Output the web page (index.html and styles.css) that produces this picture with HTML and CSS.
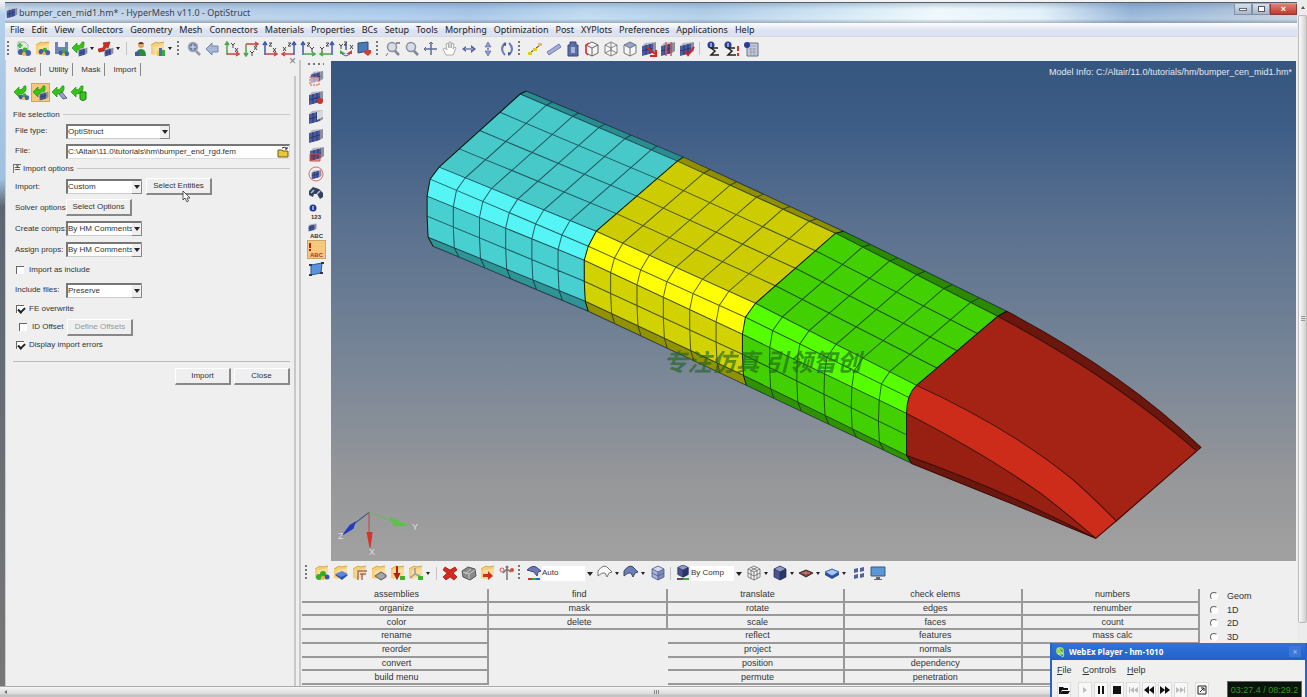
FILE: index.html
```
<!DOCTYPE html>
<html lang="en">
<head>
  <meta charset="UTF-8">
  <title>bumper_cen_mid1.hm* - HyperMesh v11.0 - OptiStruct</title>
  <link rel="stylesheet" href="styles.css">
</head>
<body>

<!-- Icon set -->
<svg class="sprite" width="0" height="0" aria-hidden="true">
  <symbol id="cube" viewBox="0 0 16 16"><path d="M2 4l6-3 6 3v8l-6 3-6-3z" fill="#46558c"/><path d="M2 4l6-3 6 3-6 3z" fill="#8f9cc8"/><path d="M8 7l6-3v8l-6 3z" fill="#2b3768"/><path d="M2 4l6-3 6 3v8l-6 3-6-3zM2 4l6 3 6-3M8 7v8" fill="none" stroke="#222c55" stroke-width=".7"/></symbol>
  <symbol id="cubelight" viewBox="0 0 16 16"><path d="M2 4l6-3 6 3v8l-6 3-6-3z" fill="#aab4d8"/><path d="M2 4l6-3 6 3-6 3z" fill="#d3daee"/><path d="M8 7l6-3v8l-6 3z" fill="#7f8cbd"/><path d="M2 4l6-3 6 3v8l-6 3-6-3zM2 4l6 3 6-3M8 7v8M2 8l6 3 6-3" fill="none" stroke="#4d5887" stroke-width=".8"/></symbol>
  <symbol id="wire" viewBox="0 0 16 16"><path d="M2 4l6-3 6 3v8l-6 3-6-3z" fill="#f6f6f6"/><path d="M2 4l6-3 6 3v8l-6 3-6-3zM2 4l6 3 6-3M8 7v8M2 12l6-3 6 3M8 1v8" fill="none" stroke="#777" stroke-width=".9"/></symbol>
  <symbol id="wiregrid" viewBox="0 0 16 16"><path d="M2 4l6-3 6 3v8l-6 3-6-3zM2 4l6 3 6-3M8 7v8M2 8l6 3 6-3M5 2.500l6 3v8M11 2.500l-6 3v8" fill="#f6f6f6" stroke="#666" stroke-width=".8"/></symbol>
  <symbol id="wirered" viewBox="0 0 16 16"><path d="M2 4l6-3 6 3v8l-6 3-6-3zM2 4l6 3 6-3M8 7v8" fill="#f6f6f6" stroke="#666"/><path d="M4 14l-2-2V4l3-2" fill="none" stroke="#d33" stroke-width="1.500"/></symbol>
  <symbol id="wiretop" viewBox="0 0 16 16"><path d="M2 4l6-3 6 3v8l-6 3-6-3z" fill="#f6f6f6"/><path d="M2 4l6-3 6 3-6 3z" fill="#92a4d6"/><path d="M2 4l6-3 6 3v8l-6 3-6-3zM2 4l6 3 6-3M8 7v8" fill="none" stroke="#777"/></symbol>
  <symbol id="slab" viewBox="0 0 16 16"><path d="M1 5l11-3v10L1 15z" fill="#4a5c9e"/><path d="M1 5l3-3 11-1-3 1z" fill="#b5b8c0"/><path d="M12 2l3-1v9l-3 2z" fill="#8d909c"/><path d="M5 4v10M9 3v10M1 10l11-3" stroke="#243066" stroke-width=".8"/></symbol>
  <symbol id="balls" viewBox="0 0 16 16"><circle cx="5" cy="11" r="3" fill="#4559a8"/><circle cx="9" cy="9" r="2.500" fill="#39b32a"/><circle cx="12" cy="12" r="3" fill="#4a5fae"/><circle cx="8" cy="13" r="2" fill="#e0c43a"/></symbol>
  <symbol id="folder" viewBox="0 0 16 16"><path d="M1 4l5-3 2 1 6-1v9l-9 4-4-1z" fill="#f5cf73"/><path d="M3 6l11-3v7l-9 4z" fill="#f8dda0"/><path d="M1 4l5-3 2 1 6-1" fill="none" stroke="#dda845"/></symbol>
  <symbol id="greenarrow" viewBox="0 0 16 16"><path d="M0 7l5-5v3q4 0 5-4h2q1 8-7 8v3z" fill="#35c516" stroke="#1f8d0c" stroke-width=".7"/></symbol>
  <symbol id="redarrow" viewBox="0 0 16 16"><path d="M0 8l5-1 1-3-1-2 7-1-2 6-2-1-2 4-5 1z" fill="#d52b1e" stroke="#9d1d15" stroke-width=".7"/></symbol>
  <symbol id="i-new" viewBox="0 0 16 16"><path d="M2 1h7l3 3v9H2z" fill="#e4ecdf" stroke="#a7b7a3"/><path d="M4 2v5M1.500 4.500h5" stroke="#49ba45" stroke-width="2"/><use href="#balls"/></symbol>
  <symbol id="i-open" viewBox="0 0 16 16"><use href="#folder"/><use href="#balls" x="2" y="1" width="14" height="14"/></symbol>
  <symbol id="i-save" viewBox="0 0 16 16"><path d="M1 1h13v12H1z" fill="#6c85b5"/><path d="M4 1h7v5H4z" fill="#eef"/><use href="#balls" x="3" y="3" width="13" height="13"/></symbol>
  <symbol id="i-import" viewBox="0 0 16 16"><use href="#greenarrow"/><use href="#slab" x="6" y="6" width="10" height="10"/></symbol>
  <symbol id="i-export" viewBox="0 0 16 16"><use href="#redarrow"/><use href="#slab" x="6" y="6" width="10" height="10"/></symbol>
  <symbol id="i-impballs" viewBox="0 0 16 16"><use href="#greenarrow"/><use href="#balls" x="3" y="3" width="13" height="13"/></symbol>
  <symbol id="i-impwire" viewBox="0 0 16 16"><use href="#greenarrow"/><path d="M7 9l3-2 3 4 2 2-4 1z" fill="#9aa2be" stroke="#5c6690"/></symbol>
  <symbol id="i-impgreen" viewBox="0 0 16 16"><use href="#greenarrow"/><path d="M9 7h6v7l-3 2-3-2z" fill="#39c51d" stroke="#16800a"/></symbol>
  <symbol id="i-user" viewBox="0 0 16 16"><circle cx="9" cy="4" r="3" fill="#e2a36b"/><path d="M6 3q3-4 6 0z" fill="#5b331a"/><path d="M4 15q0-7 5-7t5 7z" fill="#2d8d36"/><path d="M3 11l4-1v5H3z" fill="#415a9d"/></symbol>
  <symbol id="i-folders" viewBox="0 0 16 16"><use href="#folder"/><path d="M9 7h3v8H9z" fill="#3a6fd0"/><path d="M12 9h3v6h-3z" fill="#3caa35"/><path d="M7 10h2v5H7z" fill="#e7d12a"/></symbol>
  <symbol id="i-zoom" viewBox="0 0 16 16"><circle cx="7" cy="6" r="4.500" fill="#d8dce4" stroke="#8a90a0" stroke-width="1.500"/><path d="M10 10l4 4" stroke="#8085a0" stroke-width="2.500"/></symbol>
  <symbol id="i-zoomfit" viewBox="0 0 16 16"><circle cx="7" cy="6" r="4.500" fill="#6a7fae" stroke="#a5a7ae" stroke-width="1.500"/><path d="M7 3v6M4 6h6" stroke="#e2e6ef"/><path d="M10 10l4 4" stroke="#9598a5" stroke-width="2.500"/></symbol>
  <symbol id="i-zoomminus" viewBox="0 0 16 16"><use href="#i-zoom"/><path d="M11 2h4" stroke="#333"/><path d="M3 12l-2 3" stroke="#777"/></symbol>
  <symbol id="i-back" viewBox="0 0 16 16"><path d="M1 8l6-6v3h6v6H7v3z" fill="#a9b8d6" stroke="#7286ae"/></symbol>
  <symbol id="i-ax1" viewBox="0 0 16 16"><path d="M3 14V2M1 4l2-3 2 3" fill="none" stroke="#49a846" stroke-width="1.500"/><path d="M3 13h11M12 11l3 2-3 2" fill="none" stroke="#c44" stroke-width="1.500"/><path d="M7 2l2 2 2-2M9 4v3M11 7l3 4M14 7l-3 4" fill="none" stroke="#444"/></symbol>
  <symbol id="i-ax2" viewBox="0 0 16 16"><path d="M3 3v12M1 12l2 3 2-3" fill="none" stroke="#49a846" stroke-width="1.500"/><path d="M3 3h11M12 1l3 2-3 2" fill="none" stroke="#c44" stroke-width="1.500"/><path d="M7 10l2 2 2-2M9 12v3M11 5l3 4M14 5l-3 4" fill="none" stroke="#444"/></symbol>
  <symbol id="i-ax3" viewBox="0 0 16 16"><path d="M3 14V2M1 4l2-3 2 3" fill="none" stroke="#4057b0" stroke-width="1.500"/><path d="M3 13h11M12 11l3 2-3 2" fill="none" stroke="#c44" stroke-width="1.500"/><path d="M7 2h3L7 5h3M11 7l3 4M14 7l-3 4" fill="none" stroke="#444"/></symbol>
  <symbol id="i-ax4" viewBox="0 0 16 16"><path d="M13 14V2M11 4l2-3 2 3" fill="none" stroke="#4057b0" stroke-width="1.500"/><path d="M13 13H2M4 11l-3 2 3 2" fill="none" stroke="#c44" stroke-width="1.500"/><path d="M7 2h3L7 5h3M2 6l3 4M5 6l-3 4" fill="none" stroke="#444"/></symbol>
  <symbol id="i-ax5" viewBox="0 0 16 16"><path d="M3 14V2M1 4l2-3 2 3" fill="none" stroke="#4057b0" stroke-width="1.500"/><path d="M3 13h11M12 11l3 2-3 2" fill="none" stroke="#49a846" stroke-width="1.500"/><path d="M7 2h3L7 5h3M10 6l2 2 2-2M12 8v3" fill="none" stroke="#444"/></symbol>
  <symbol id="i-ax6" viewBox="0 0 16 16"><path d="M13 14V2M11 4l2-3 2 3" fill="none" stroke="#4057b0" stroke-width="1.500"/><path d="M13 13H2M4 11l-3 2 3 2" fill="none" stroke="#49a846" stroke-width="1.500"/><path d="M7 2h3L7 5h3M1 6l2 2 2-2M3 8v3" fill="none" stroke="#444"/></symbol>
  <symbol id="i-iso" viewBox="0 0 16 16"><path d="M8 9V2" stroke="#4057b0" stroke-width="1.500"/><path d="M8 13l-6-4v4z" fill="#49a846"/><path d="M8 13l6-4v4z" fill="#c44"/><path d="M4 13l4 2 4-2" stroke="#4057b0" fill="none"/><path d="M1 3l2 2 2-2M3 5v3M6 1h3L6 4h3M12 4l3 4M15 4l-3 4" fill="none" stroke="#444"/></symbol>
  <symbol id="i-screen" viewBox="0 0 16 16"><path d="M1 2l10-1v9L1 12z" fill="#4a7ab5" stroke="#2d4e7c"/><path d="M8 9h6v3l-3 3-4-3z" fill="#d33c33"/></symbol>
  <symbol id="i-pan" viewBox="0 0 16 16"><path d="M8 2v12M2 8h12" stroke="#5b6a98" stroke-width="1.500"/><path d="M6 3l2-2 2 2M3 6L1 8l2 2" fill="none" stroke="#5b6a98"/></symbol>
  <symbol id="i-hand" viewBox="0 0 16 16"><path d="M4 14L1 8l2-1 2 2-1-6 2-1 1 5V1h2v6l1-5 2 1-1 5 2-2 1 1-3 7z" fill="#fff" stroke="#999" stroke-width=".8"/></symbol>
  <symbol id="i-horiz" viewBox="0 0 16 16"><path d="M1 8l4-3v6zM15 8l-5-4v8z" fill="#54639d"/><path d="M4 8h8" stroke="#8e97ba" stroke-width="2"/></symbol>
  <symbol id="i-vert" viewBox="0 0 16 16"><path d="M8 1l3 5H5zM8 15l3-5H5z" fill="#8f9ccc" stroke="#5f6fa8" stroke-width=".7"/><circle cx="8" cy="8" r="1" fill="#5f6fa8"/></symbol>
  <symbol id="i-rot" viewBox="0 0 16 16"><path d="M6 2Q0 8 6 14M10 2q6 6 0 12" fill="none" stroke="#6d7dad" stroke-width="2"/><path d="M7 1v4L4 4zM9 15v-4l3 1z" fill="#43528c"/></symbol>
  <symbol id="i-dist" viewBox="0 0 16 16"><path d="M3 12l10-8" stroke="#222"/><path d="M1 11h4v3H1zM11 2h4v3h-4zM6 7h4v3H6z" fill="#e7c62a"/></symbol>
  <symbol id="i-ruler" viewBox="0 0 16 16"><path d="M1 11L13 3l2 3L3 14z" fill="#a2aada" stroke="#7580b5"/></symbol>
  <symbol id="i-weight" viewBox="0 0 16 16"><path d="M5 1h6v3h2v11H3V4h2z" fill="#5b6ea8" stroke="#37477e"/><path d="M6 6h4v6H6z" fill="#a6b4dc"/></symbol>
  <symbol id="i-slabred" viewBox="0 0 16 16"><use href="#slab"/><path d="M7 7l7 6M15 9v6H9" fill="none" stroke="#d22" stroke-width="2"/></symbol>
  <symbol id="i-slabline" viewBox="0 0 16 16"><use href="#slab"/><path d="M6 1v14M11 1v14" stroke="#d55" stroke-width="1.500"/></symbol>
  <symbol id="i-slabcheck" viewBox="0 0 16 16"><use href="#slab"/><path d="M6 10l3 4 6-8" fill="none" stroke="#c22" stroke-width="2"/></symbol>
  <symbol id="i-sum" viewBox="0 0 16 16"><circle cx="6" cy="4" r="3.500" fill="#2a3c98"/><path d="M6 2v4" stroke="#fff"/><path d="M13 7H6l4 3-4 4h8" fill="none" stroke="#222" stroke-width="1.500"/></symbol>
  <symbol id="i-sumred" viewBox="0 0 16 16"><use href="#i-sum" x="-2"/><path d="M14 5v5M14 12v3" stroke="#c33" stroke-width="2"/></symbol>
  <symbol id="i-calc" viewBox="0 0 16 16"><path d="M4 2h11v13H4z" fill="#c4c9d8" stroke="#6a7290"/><path d="M6 5h7M6 8h7M6 11h7M8 7v7M11 7v7" stroke="#9aa2ba"/><circle cx="4" cy="4" r="3" fill="#2a3c98"/></symbol>
  <symbol id="i-mask" viewBox="0 0 16 16"><use href="#slab" x="2" y="-1" width="14" height="14"/><path d="M2 6h9v8H2z" fill="#f4e4e2" fill-opacity=".6" stroke="#d65548" stroke-dasharray="2 1"/></symbol>
  <symbol id="i-maskdot" viewBox="0 0 16 16"><use href="#slab"/><circle cx="12" cy="11" r="3" fill="#c8332b"/></symbol>
  <symbol id="i-unmask" viewBox="0 0 16 16"><use href="#slab"/><path d="M9 3l6-2v7l-6 3z" fill="#d7dae2"/></symbol>
  <symbol id="i-masklow" viewBox="0 0 16 16"><use href="#slab" x="1" y="-1"/><path d="M2 7h10v7H2z" fill="#9a2b33" fill-opacity=".4" stroke="#d65548"/></symbol>
  <symbol id="i-circle" viewBox="0 0 16 16"><use href="#slab" x="3" y="3" width="11" height="11"/><circle cx="8" cy="8" r="7" fill="none" stroke="#dc6a60"/></symbol>
  <symbol id="i-bino" viewBox="0 0 16 16"><path d="M1 6l4-4 6 2 4 4v4l-3 2-3-5-3 0-1 3-4-2z" fill="#32415f"/><path d="M3 8l3-3M9 9l3-3" stroke="#b5c3dd" stroke-width="1.500"/></symbol>
  <symbol id="i-shape" viewBox="0 0 16 16"><path d="M3 4l11-2-1 10-10 2z" fill="#5c94dc" stroke="#2d5796"/><path d="M1 4h3M13 2h3M1 14h3M12 12h3" stroke="#335" stroke-width="2"/></symbol>
  <symbol id="i-fassy" viewBox="0 0 16 16"><use href="#folder"/><circle cx="9" cy="9" r="3" fill="#2fae20"/><circle cx="5" cy="12" r="3" fill="#3baa30"/><circle cx="13" cy="12" r="2.500" fill="#3a52b8"/><circle cx="9" cy="13" r="2" fill="#e6bf2f"/></symbol>
  <symbol id="i-fcomp" viewBox="0 0 16 16"><use href="#folder"/><path d="M2 10l7-3 6 3-6 5z" fill="#2b55b5"/><path d="M2 9l7-3 6 3-7 3z" fill="#5f86d6"/></symbol>
  <symbol id="i-fmat" viewBox="0 0 16 16"><use href="#folder"/><path d="M6 15V6h9M8 9h6M10 9v6" fill="none" stroke="#a0706a" stroke-width="1.500"/></symbol>
  <symbol id="i-fprop" viewBox="0 0 16 16"><use href="#folder"/><path d="M4 11l6-4 5 3v2l-5 3z" fill="#a6a6a6" stroke="#555"/></symbol>
  <symbol id="i-fload" viewBox="0 0 16 16"><use href="#folder"/><path d="M7 1v8M5 9l2 4 2-4z" stroke="#b81e17" fill="#b81e17" stroke-width="2"/><path d="M10 11h5v4h-5z" fill="#3eb52c"/></symbol>
  <symbol id="i-fsys" viewBox="0 0 16 16"><use href="#folder"/><path d="M7 3v6l-5 4M7 9l5 2" fill="none" stroke="#99a" stroke-width="1.500"/><path d="M10 11h5v4h-5z" fill="#3eb52c"/></symbol>
  <symbol id="i-delete" viewBox="0 0 16 16"><path d="M3 2l5 3 5-3 2 3-4 3 4 4-3 3-4-3-4 3-3-3 4-4-4-3z" fill="#d22c22" stroke="#8d1510" stroke-width=".7"/></symbol>
  <symbol id="i-card" viewBox="0 0 16 16"><path d="M1 6l6-4 7 2 1 7-6 4-7-3z" fill="#8a8a8a" stroke="#555"/><path d="M2 7l6 2 6-4M8 9v5M4 9l6-5" fill="none" stroke="#c9c9c9"/></symbol>
  <symbol id="i-org" viewBox="0 0 16 16"><use href="#folder"/><path d="M3 9h5V6l5 5-5 4v-3H3z" fill="#d62c20"/></symbol>
  <symbol id="i-renum" viewBox="0 0 16 16"><path d="M8 15V4M4 8l4-4 4 3" fill="none" stroke="#777" stroke-width="1.500"/><circle cx="3" cy="5" r="2" fill="#eee" stroke="#c55"/><circle cx="13" cy="5" r="2" fill="#d44"/><circle cx="8" cy="2" r="1.500" fill="#777"/></symbol>
  <symbol id="i-auto" viewBox="0 0 16 16"><path d="M1 5q5-5 9-3l5 4-3 1-1 4-3-4z" fill="#6b7bb1" stroke="#39477c"/><path d="M2 13h4v2H2z" fill="#c33"/><path d="M6 13h4v2H6z" fill="#3a3"/><path d="M10 13h4v2h-4z" fill="#36c"/></symbol>
  <symbol id="i-surfw" viewBox="0 0 16 16"><path d="M1 6q5-7 9-4l5 5-3 1-2 4-2-4q-3-1-7 3z" fill="#fafafa" stroke="#777"/></symbol>
  <symbol id="i-surfb" viewBox="0 0 16 16"><path d="M1 6q5-7 9-4l5 5-3 1-2 4-2-4q-3-1-7 3z" fill="#6d7eb6" stroke="#3b4672"/></symbol>
  <symbol id="i-bycomp" viewBox="0 0 16 16"><use href="#cube" x="1" y="-1" width="14" height="14"/><path d="M2 14h6" stroke="#555" stroke-width="2"/><path d="M8 14h6" stroke="#3ba837" stroke-width="2"/></symbol>
  <symbol id="i-shrink" viewBox="0 0 16 16"><path d="M1 8l7-3 7 3-7 4z" fill="#7e3b3b" stroke="#333"/><path d="M4 8h8M8 6v4" stroke="#e5867e"/></symbol>
  <symbol id="i-layer" viewBox="0 0 16 16"><path d="M1 8l7-4 7 4v2l-7 4-7-4z" fill="#2c4ca0"/><path d="M1 7l7-3 7 3-7 4z" fill="#a8c6f4" stroke="#3a5cae"/></symbol>
  <symbol id="i-tiles" viewBox="0 0 16 16"><path d="M3 4l4-1v4l-4 1zM9 3l4-1v4L9 7zM3 10l4-1v4l-4 1zM9 9l4-1v4l-4 1z" fill="#51639d"/></symbol>
  <symbol id="i-monitor" viewBox="0 0 16 16"><path d="M1 2h14v9H1z" fill="#5b97d6" stroke="#3c5878"/><path d="M6 12h4v2H6zM4 14h8v1H4z" fill="#666"/></symbol>
</svg>

<div class="page">
  <div class="window">
    <!-- Title bar -->
    <header class="titlebar">
      <svg class="app-icon"><use href="#slab"/></svg>
      <h1>bumper_cen_mid1.hm* - HyperMesh v11.0 - OptiStruct</h1>
      <div class="window-buttons">
        <button aria-label="Minimize"><i class="min"></i></button>
        <button aria-label="Restore"><i class="max"></i></button>
        <button class="close" aria-label="Close window">×</button>
      </div>
    </header>

    <nav class="menubar">
      <a href="#">File</a>
      <a href="#">Edit</a>
      <a href="#">View</a>
      <a href="#">Collectors</a>
      <a href="#">Geometry</a>
      <a href="#">Mesh</a>
      <a href="#">Connectors</a>
      <a href="#">Materials</a>
      <a href="#">Properties</a>
      <a href="#">BCs</a>
      <a href="#">Setup</a>
      <a href="#">Tools</a>
      <a href="#">Morphing</a>
      <a href="#">Optimization</a>
      <a href="#">Post</a>
      <a href="#">XYPlots</a>
      <a href="#">Preferences</a>
      <a href="#">Applications</a>
      <a href="#">Help</a>
    </nav>

    <!-- Main toolbar -->
    <div class="toolbar">
      <span class="grip"></span>
      <button class="tool"><svg><use href="#i-new"/></svg></button>
      <button class="tool"><svg><use href="#i-open"/></svg></button>
      <button class="tool"><svg><use href="#i-save"/></svg></button>
      <button class="tool drop"><svg><use href="#i-import"/></svg></button>
      <button class="tool drop"><svg><use href="#i-export"/></svg></button>
      <span class="sep"></span>
      <button class="tool"><svg><use href="#i-user"/></svg></button>
      <button class="tool drop"><svg><use href="#i-folders"/></svg></button>
      <span class="grip"></span>
      <button class="tool"><svg><use href="#i-zoomfit"/></svg></button>
      <button class="tool"><svg><use href="#i-back"/></svg></button>
      <button class="tool"><svg><use href="#i-ax1"/></svg></button>
      <button class="tool"><svg><use href="#i-ax2"/></svg></button>
      <button class="tool"><svg><use href="#i-ax3"/></svg></button>
      <button class="tool"><svg><use href="#i-ax4"/></svg></button>
      <button class="tool"><svg><use href="#i-ax5"/></svg></button>
      <button class="tool"><svg><use href="#i-ax6"/></svg></button>
      <button class="tool"><svg><use href="#i-iso"/></svg></button>
      <button class="tool"><svg><use href="#i-screen"/></svg></button>
      <span class="grip"></span>
      <button class="tool"><svg><use href="#i-zoomminus"/></svg></button>
      <button class="tool"><svg><use href="#i-zoom"/></svg></button>
      <button class="tool"><svg><use href="#i-pan"/></svg></button>
      <button class="tool"><svg><use href="#i-hand"/></svg></button>
      <button class="tool"><svg><use href="#i-horiz"/></svg></button>
      <button class="tool"><svg><use href="#i-vert"/></svg></button>
      <button class="tool"><svg><use href="#i-rot"/></svg></button>
      <span class="grip"></span>
      <button class="tool"><svg><use href="#i-dist"/></svg></button>
      <button class="tool"><svg><use href="#i-ruler"/></svg></button>
      <button class="tool"><svg><use href="#i-weight"/></svg></button>
      <button class="tool"><svg><use href="#wirered"/></svg></button>
      <button class="tool"><svg><use href="#wire"/></svg></button>
      <button class="tool"><svg><use href="#wiretop"/></svg></button>
      <button class="tool"><svg><use href="#i-slabred"/></svg></button>
      <button class="tool"><svg><use href="#i-slabline"/></svg></button>
      <button class="tool"><svg><use href="#i-slabcheck"/></svg></button>
      <span class="sep"></span>
      <button class="tool"><svg><use href="#i-sum"/></svg></button>
      <button class="tool"><svg><use href="#i-sumred"/></svg></button>
      <button class="tool"><svg><use href="#i-calc"/></svg></button>
    </div>

    <div class="main">
      <!-- Import browser -->
      <aside class="browser">
        <button class="browser-close" aria-label="Close browser">×</button>
        <div class="tabs">
          <button>Model</button>
          <button>Utility</button>
          <button>Mask</button>
          <button>Import</button>
        </div>
        <div class="browser-body">
          <div class="import-types">
            <button class="tool"><svg><use href="#i-impballs"/></svg></button>
            <button class="tool active"><svg><use href="#i-import"/></svg></button>
            <button class="tool"><svg><use href="#i-impwire"/></svg></button>
            <button class="tool"><svg><use href="#i-impgreen"/></svg></button>
          </div>
          <form class="import-form">
            <div class="legend">File selection</div>
            <div class="row">
              <label for="file-type">File type:</label>
              <span class="combo wide"><select id="file-type"><option>OptiStruct</option></select></span>
            </div>
            <div class="row">
              <label for="file">File:</label>
              <span class="file-box">
                <input type="text" id="file" value="C:\Altair\11.0\tutorials\hm\bumper_end_rgd.fem">
                <button type="button" aria-label="Browse"><svg viewBox="0 0 12 12"><path d="M1 4h4l1 1h5v6H1z" fill="#e8c83a" stroke="#6d5c14"/><path d="M5 2q3-2 5 1M10 1v2H8" fill="none" stroke="#222"/></svg></button>
              </span>
            </div>
            <div class="legend options"><span class="toggle">≚</span>Import options</div>
            <div class="row tall">
              <label for="import-mode">Import:</label>
              <span class="combo"><select id="import-mode"><option>Custom</option></select></span>
              <span class="entities">
                <button type="button" class="btn">Select Entities</button>
                <svg class="cursor" viewBox="0 0 9 13"><path d="M1 1v9l2-2 2 4 1.500-1-1.500-3h3z" fill="#fff" stroke="#333" stroke-width=".8"/></svg>
              </span>
            </div>
            <div class="row tall">
              <span class="name">Solver options:</span>
              <button type="button" class="btn">Select Options</button>
            </div>
            <div class="row tall">
              <label for="comps">Create comps:</label>
              <span class="combo"><select id="comps"><option>By HM Comments</option></select></span>
            </div>
            <div class="row tall">
              <label for="props">Assign props:</label>
              <span class="combo"><select id="props"><option>By HM Comments</option></select></span>
            </div>
            <div class="row check">
              <input type="checkbox" id="as-include"><label for="as-include">Import as include</label>
            </div>
            <div class="row">
              <label for="include-files">Include files:</label>
              <span class="combo"><select id="include-files"><option>Preserve</option></select></span>
            </div>
            <div class="row check short">
              <input type="checkbox" id="overwrite" checked><label for="overwrite">FE overwrite</label>
            </div>
            <div class="row check short indent">
              <input type="checkbox" id="offset"><label for="offset">ID Offset</label>
              <button type="button" class="btn" disabled>Define Offsets</button>
            </div>
            <div class="row check short">
              <input type="checkbox" id="errors" checked><label for="errors">Display import errors</label>
            </div>
            <div class="actions">
              <button type="submit" class="btn">Import</button>
              <button type="button" class="btn">Close</button>
            </div>
          </form>
        </div>
      </aside>

      <section class="workspace">
        <div class="view">
          <div class="side-tools">
            <span class="grip flat"></span>
            <button class="tool"><svg><use href="#i-mask"/></svg></button>
            <button class="tool"><svg><use href="#i-maskdot"/></svg></button>
            <button class="tool"><svg><use href="#i-unmask"/></svg></button>
            <button class="tool"><svg><use href="#slab"/></svg></button>
            <button class="tool"><svg><use href="#i-masklow"/></svg></button>
            <button class="tool"><svg><use href="#i-circle"/></svg></button>
            <button class="tool"><svg><use href="#i-bino"/></svg></button>
            <button class="tool"><svg viewBox="0 0 16 16"><circle cx="5" cy="4" r="3.500" fill="#24399d"/><path d="M5 2v4" stroke="#fff"/><text x="3" y="15" class="glyph">123</text></svg></button>
            <button class="tool"><svg viewBox="0 0 16 16"><use href="#slab" width="9" height="9"/><text x="2" y="15" class="glyph">ABC</text></svg></button>
            <button class="tool active"><svg viewBox="0 0 16 16"><path d="M2 1v5M2 7v2" stroke="#b32218" stroke-width="2"/><text x="2" y="15" class="glyph glyph-red">ABC</text></svg></button>
            <button class="tool"><svg><use href="#i-shape"/></svg></button>
          </div>
          <div class="canvas">
            <svg class="scene" viewBox="331 61 964 499" preserveAspectRatio="xMinYMin meet">
              <g id="model"></g>
              <!-- end cap surface -->
              <path d="M997 316L1006 311Q1122 372 1200 447L1195 450Q1110 376 997 316z" fill="#6b170d"/>
              <path d="M906 413L906 455L911 463Q980 491 1040 515L1095 538Q1065 512 1040 493Q985 454 906 413z" fill="#982012"/>
              <path d="M906 455L911 463Q980 491 1040 515L1095 538Q1000 488 906 455z" fill="#6b170d"/>
              <path d="M916 385L997 316Q1110 376 1195 450L1200 447L1116 521Q1090 495 1073 480Q1010 428 916 385z" fill="#a42315"/>
              <path d="M916 385Q1010 428 1073 480Q1090 495 1116 521L1095 538Q1065 512 1040 493Q985 454 906 413Q906 394 916 385z" fill="#cd2c1a"/>
              <path class="edge" d="M997 316L1006 311Q1122 372 1200 447L1095 538L1040 515L911 463M997 316Q1110 376 1195 450M916 385Q1010 428 1073 480Q1090 495 1116 521M906 413Q985 454 1040 493Q1065 512 1095 538M906 455Q1000 488 1095 538"/>
              <path class="seam" d="M1006 311L997 316L916 385Q906 394 906 413V455L911 463"/>
              <!-- axis triad -->
              <path d="M369 512L352 525" stroke="#3a5580"/>
              <path d="M343 534l7-9 5-3-2 6z" fill="#2639c4" stroke="#2639c4"/>
              <path d="M369 512l22 8" stroke="#5cc04a" stroke-dasharray="3 1"/>
              <path d="M390 517l17 8-13 0z" fill="#5cc04a" stroke="#5cc04a"/>
              <path d="M369 512v22" stroke="#c4453f"/>
              <path d="M367 532h5l-2 15z" fill="#d8332a" stroke="#d8332a"/>
              <text class="axis" x="338" y="539">Z</text>
              <text class="axis" x="412" y="530">Y</text>
              <text class="axis" x="369" y="555">X</text>
              <text class="watermark" x="663" y="371">专注仿真 引领智创</text>
            </svg>
            <div class="model-info">Model Info: C:/Altair/11.0/tutorials/hm/bumper_cen_mid1.hm*</div>
          </div>
        </div>

        <!-- Collector and display toolbar -->
        <div class="toolbar lower">
          <span class="grip"></span>
          <button class="tool"><svg><use href="#i-fassy"/></svg></button>
          <button class="tool"><svg><use href="#i-fcomp"/></svg></button>
          <button class="tool"><svg><use href="#i-fmat"/></svg></button>
          <button class="tool"><svg><use href="#i-fprop"/></svg></button>
          <button class="tool"><svg><use href="#i-fload"/></svg></button>
          <button class="tool drop"><svg><use href="#i-fsys"/></svg></button>
          <span class="sep"></span>
          <button class="tool"><svg><use href="#i-delete"/></svg></button>
          <button class="tool"><svg><use href="#i-card"/></svg></button>
          <button class="tool"><svg><use href="#i-org"/></svg></button>
          <button class="tool"><svg><use href="#i-renum"/></svg></button>
          <span class="grip"></span>
          <svg class="mode-icon"><use href="#i-auto"/></svg>
          <span class="mode"><select aria-label="Color mode"><option>Auto</option></select></span>
          <button class="tool drop"><svg><use href="#i-surfw"/></svg></button>
          <button class="tool drop"><svg><use href="#i-surfb"/></svg></button>
          <button class="tool"><svg><use href="#cubelight"/></svg></button>
          <span class="sep"></span>
          <svg class="mode-icon"><use href="#i-bycomp"/></svg>
          <span class="mode"><select aria-label="Element color"><option>By Comp</option></select></span>
          <button class="tool drop"><svg><use href="#wiregrid"/></svg></button>
          <button class="tool drop"><svg><use href="#cube"/></svg></button>
          <button class="tool drop"><svg><use href="#i-shrink"/></svg></button>
          <button class="tool drop"><svg><use href="#i-layer"/></svg></button>
          <button class="tool"><svg><use href="#i-tiles"/></svg></button>
          <button class="tool"><svg><use href="#i-monitor"/></svg></button>
        </div>

        <!-- Tool page -->
        <div class="panel">
          <div class="col">
            <button>assemblies</button>
            <button>organize</button>
            <button>color</button>
            <button>rename</button>
            <button>reorder</button>
            <button>convert</button>
            <button>build menu</button>
          </div>
          <div class="col">
            <button>find</button>
            <button>mask</button>
            <button>delete</button>
          </div>
          <div class="col">
            <button>translate</button>
            <button>rotate</button>
            <button>scale</button>
            <button>reflect</button>
            <button>project</button>
            <button>position</button>
            <button>permute</button>
          </div>
          <div class="col">
            <button>check elems</button>
            <button>edges</button>
            <button>faces</button>
            <button>features</button>
            <button>normals</button>
            <button>dependency</button>
            <button>penetration</button>
          </div>
          <div class="col">
            <button>numbers</button>
            <button>renumber</button>
            <button>count</button>
            <button>mass calc</button>
            <button></button>
            <button></button>
            <button></button>
          </div>
          <div class="col pages">
            <label><input type="radio" name="page">Geom</label>
            <label><input type="radio" name="page">1D</label>
            <label><input type="radio" name="page">2D</label>
            <label><input type="radio" name="page">3D</label>
          </div>
        </div>
      </section>
    </div>
  </div>

  <div class="vscroll"><span class="up"></span><span class="thumb"></span></div>
  <div class="hscroll"><span class="left"></span><span class="marks"></span></div>

  <!-- Recording player -->
  <div class="player">
    <div class="player-title">
      <svg viewBox="0 0 12 12"><circle cx="5" cy="5" r="4" fill="#8fd45b"/><path d="M3 2l5 6 0-3M8 11l-5-3h6z" fill="#2f8d2a" stroke="#e6f6dd" stroke-width=".7"/></svg>
      <span>WebEx Player - hm-1010</span>
      <button aria-label="Close player">×</button>
    </div>
    <div class="player-menu">
      <a href="#"><u>F</u>ile</a>
      <a href="#"><u>C</u>ontrols</a>
      <a href="#"><u>H</u>elp</a>
    </div>
    <div class="player-bar">
      <button aria-label="Open"><svg viewBox="0 0 12 12"><path d="M1 3h4l1 1h4v2H4l-2 4H1zM4 7h8l-2 3H2z"/></svg></button>
      <span class="space"></span>
      <button disabled aria-label="Play"><svg viewBox="0 0 12 12"><path d="M4 3l4 3-4 3z"/></svg></button>
      <button aria-label="Pause"><svg viewBox="0 0 12 12"><path d="M3 2h2v8H3zM7 2h2v8H7z"/></svg></button>
      <button aria-label="Stop"><svg viewBox="0 0 12 12"><path d="M2 2h8v8H2z"/></svg></button>
      <button disabled aria-label="Previous"><svg viewBox="0 0 12 12"><path d="M2 3h1v6H2zM7 3v6L3 6zM11 3v6L7 6z"/></svg></button>
      <button aria-label="Rewind"><svg viewBox="0 0 12 12"><path d="M6 2v8L1 6zM11 2v8L6 6z"/></svg></button>
      <button aria-label="Forward"><svg viewBox="0 0 12 12"><path d="M1 2v8l5-4zM6 2v8l5-4z"/></svg></button>
      <button disabled aria-label="Next"><svg viewBox="0 0 12 12"><path d="M1 3v6l4-3zM5 3v6l4-3zM9 3h1v6H9z"/></svg></button>
      <span class="space"></span>
      <button aria-label="Full screen"><svg viewBox="0 0 12 12"><path d="M2 2h8v8H2z" fill="none" stroke="#222"/><path d="M4 8l4-4M5 4h3v3" fill="none" stroke="#222"/></svg></button>
      <output>03:27.4 / 08:29.2</output>
    </div>
  </div>
</div>

<script src="model.js"></script>
</body>
</html>
```

FILE: styles.css
```
* {
  box-sizing: border-box;
}
html, body {
  margin: 0;
  height: 100%;
}
body {
  font-family: "Liberation Sans", Arial, sans-serif;
  font-size: 9px;
  line-height: 12px;
  color: #333;
  background: #efefef;
  overflow: hidden;
}
button, input, select {
  font: inherit;
  color: inherit;
  margin: 0;
  padding: 0;
  border: 0;
  border-radius: 0;
  background: none;
}
a {
  color: inherit;
  text-decoration: none;
}
.sprite {
  position: absolute;
}
.glyph {
  font: bold 6px "Liberation Sans", sans-serif;
  fill: #333;
}
.glyph-red {
  fill: #a33;
}

.page {
  position: relative;
  display: grid;
  grid-template-columns: minmax(0, 1fr) 10px;
  grid-template-rows: minmax(0, 1fr) 11px;
  height: 100vh;
}
.window {
  display: flex;
  flex-direction: column;
  border-top: 2px solid #f4f4f4;
  border-left: 5px solid;
  border-image: linear-gradient(#f4f4f4 0, #b4d0ea 2%, #9fc0e0 26%, #5d6672 30%, #777 100%) 1;
}

/* Title bar */
.titlebar {
  display: flex;
  align-items: center;
  height: 21px;
  border-top: 1px solid #56606c;
  padding-left: 1px;
  background:
    linear-gradient(rgba(90,110,140,.3), rgba(255,255,255,0) 30%, rgba(255,255,255,.2) 80%, rgba(120,130,145,.5)),
    linear-gradient(100deg, #c3d7ea 0, #b9cee4 12%, #a6c8ea 30%, #9fc0e4 36%, #b9d6ee 45%, #a9c8e4 54%, #d5eaf6 66%, #eef8fc 72%, #e0f0f9 80%, #8fb0d5 87%, #9db9d7 92%, #c0cedd 100%);
}
.app-icon {
  width: 12px;
  height: 12px;
}
.titlebar h1 {
  flex: 1;
  margin: 0 0 0 1px;
  font: 9px/12px "Noto Sans", sans-serif;
  color: #3a4450;
}
.window-buttons {
  display: flex;
  align-self: flex-start;
  margin-top: 1px;
}
.window-buttons button {
  display: flex;
  align-items: center;
  justify-content: center;
  width: 18px;
  height: 11px;
  border: 1px solid #8190a4;
  border-top: 0;
  background: linear-gradient(#d5dfe9, #a8b8ca);
}
.window-buttons .close {
  width: 27px;
  border-color: #8f3a34;
  background: linear-gradient(#dc8377, #c23a2c);
  color: #fff;
  font-weight: bold;
  line-height: 9px;
}
.min {
  width: 8px;
  height: 3px;
  background: #fff;
  border: 1px solid #667;
}
.max {
  width: 7px;
  height: 6px;
  background: #fff;
  border: 1px solid #556;
}

/* Menu bar */
.menubar {
  display: flex;
  align-items: center;
  gap: 7px;
  height: 13px;
  padding-left: 5px;
  background: linear-gradient(#fbfcfe, #dce2f1 60%);
  font-family: "Noto Sans", sans-serif;
  color: #222;
}

/* Toolbars */
.toolbar {
  display: flex;
  align-items: center;
  gap: 2px;
  height: 24px;
  padding-left: 1px;
  border-top: 1px solid #d6d8de;
}
.tool {
  display: flex;
  align-items: center;
  justify-content: center;
  flex: none;
  width: 17px;
  height: 17px;
}
.tool svg,
.mode-icon {
  width: 16px;
  height: 16px;
  flex: none;
}
.tool.drop {
  width: 24px;
  justify-content: space-between;
}
.tool.drop::after {
  content: "";
  margin-right: 2px;
  border: 2px solid transparent;
  border-top: 3px solid #222;
  border-bottom: 0;
}
.tool.active {
  background: #f5c87c;
  outline: 1px solid #cda569;
}
.grip {
  width: 2px;
  height: 16px;
  margin: 0 4px 0 1px;
  background: repeating-linear-gradient(#777 0, #777 2px, transparent 2px, transparent 4px);
}
.grip.flat {
  width: 16px;
  height: 2px;
  margin: 0;
  background: repeating-linear-gradient(90deg, #777 0, #777 2px, transparent 2px, transparent 5px);
}
.sep {
  width: 1px;
  height: 13px;
  margin: 0 2px;
  background: #c4c4c4;
}

.main {
  flex: 1;
  display: flex;
  min-height: 0;
}

/* Import browser */
.browser {
  position: relative;
  width: 296px;
  flex: none;
  display: flex;
  flex-direction: column;
  border-left: 1px solid #ccc;
  border-right: 2px solid #c8c8c8;
  font-size: 8px;
  background: #efefef;
}
.browser-close {
  position: absolute;
  top: -4px;
  right: 3px;
  font-size: 12px;
  line-height: 10px;
  color: #777;
}
.tabs {
  display: flex;
  padding-top: 3px;
}
.tabs button {
  height: 13px;
  padding: 0 4px 0 8px;
  border-right: 1px solid #888;
}
.browser-body {
  flex: 1;
  margin-right: 3px;
  padding: 8px 0 0 7px;
  border-right: 2px solid #c8c8c8;
}
.import-types {
  display: flex;
  gap: 2px;
}
.import-form {
  padding-top: 7px;
  padding-right: 4px;
}
.legend {
  display: flex;
  align-items: center;
  height: 13px;
}
.legend::after {
  content: "";
  flex: 1;
  height: 1px;
  margin-left: 3px;
  background: #c6c6c6;
}
.legend.options {
  height: 15px;
}
.toggle {
  width: 8px;
  height: 9px;
  margin-right: 2px;
  border-top: 1px solid #777;
  border-left: 1px solid #777;
  line-height: 8px;
}
.row {
  display: flex;
  align-items: center;
  height: 20px;
  padding-left: 2px;
}
.row.tall {
  height: 21px;
}
.row > label,
.row > .name {
  width: 51px;
  white-space: nowrap;
}
.combo {
  position: relative;
  width: 76px;
  height: 15px;
}
.combo.wide {
  width: 104px;
}
.combo select {
  appearance: none;
  display: block;
  width: 100%;
  height: 100%;
  background: #fff;
  border: 1px solid #ccc;
  border-top: 2px solid #777;
  border-left: 2px solid #777;
}
.combo::after {
  content: "";
  position: absolute;
  top: 2px;
  right: 0;
  width: 9px;
  height: 12px;
  border-right: 1px solid #888;
  border-bottom: 1px solid #888;
  background: #efefef;
}
.combo::before {
  content: "";
  position: absolute;
  z-index: 1;
  top: 6px;
  right: 2px;
  border: 3px solid transparent;
  border-top: 4px solid #222;
  border-bottom: 0;
}
.file-box {
  flex: 1;
  display: flex;
  height: 15px;
  background: #fff;
  border: 1px solid #ddd;
  border-top: 2px solid #777;
  border-left: 2px solid #777;
}
.file-box input {
  flex: 1;
  min-width: 0;
}
.file-box svg {
  display: block;
  width: 12px;
  height: 12px;
}
.btn {
  width: 66px;
  height: 17px;
  border-top: 1px solid #fff;
  border-left: 1px solid #fff;
  border-right: 2px solid #888;
  border-bottom: 2px solid #888;
  background: #efefef;
}
.btn:disabled {
  color: #999;
}
.entities {
  position: relative;
  margin-left: 4px;
}
.cursor {
  position: absolute;
  left: 36px;
  top: 12px;
  width: 9px;
  height: 13px;
}
.row.check > label {
  width: auto;
}
.row.check.short {
  height: 18px;
}
.row.indent {
  padding-left: 5px;
}
.row.indent .btn {
  margin-left: 4px;
}
.row input[type="checkbox"] {
  appearance: none;
  width: 8px;
  height: 8px;
  margin: 0 5px 0 1px;
  background: #fff;
  border-top: 1px solid #666;
  border-left: 1px solid #666;
}
.row input[type="checkbox"]:checked::after {
  content: "";
  display: block;
  width: 5px;
  height: 3px;
  margin: 1px;
  border-left: 2px solid #222;
  border-bottom: 2px solid #222;
  transform: rotate(-45deg);
}
.actions {
  display: flex;
  justify-content: flex-end;
  gap: 3px;
  margin-top: 7px;
  padding-top: 6px;
  border-top: 1px solid #bbb;
}
.actions .btn {
  width: 56px;
}

/* Graphics area */
.workspace {
  flex: 1;
  min-width: 0;
  display: flex;
  flex-direction: column;
}
.view {
  flex: 1;
  min-height: 0;
  display: flex;
  padding-right: 1px;
}
.side-tools {
  width: 30px;
  flex: none;
  display: flex;
  flex-direction: column;
  align-items: center;
  gap: 2px;
  padding-top: 3px;
}
.side-tools .grip {
  margin-bottom: 3px;
}
.canvas {
  position: relative;
  flex: 1;
  min-width: 0;
  margin-top: 1px;
  background: linear-gradient(#35567f 0, #3c5c86 12%, #59708f 32%, #7a8797 62%, #969799 84%, #a1a1a1 100%);
}
.scene {
  display: block;
  width: 100%;
  height: 100%;
}
.grid-line {
  fill: none;
  stroke: #123;
  stroke-opacity: .7;
  stroke-width: 1;
}
.edge {
  fill: none;
  stroke: #3c0d08;
  stroke-width: 1;
}
.seam {
  fill: none;
  stroke: #0b1a08;
  stroke-width: 1;
}
.axis {
  font: 9px "Liberation Sans", sans-serif;
  fill: #dcdcdc;
}
.watermark {
  font: italic bold 24px "Noto Sans CJK SC", sans-serif;
  fill: #1e6420;
  fill-opacity: .65;
}
.model-info {
  position: absolute;
  top: 5px;
  right: 4px;
  color: #e4e9f0;
}

/* Lower toolbar */
.toolbar.lower {
  border-top: 0;
  padding-left: 3px;
}
.mode {
  position: relative;
  width: 51px;
  margin: 0 2px 0 -2px;
}
.mode select {
  appearance: none;
  display: block;
  width: 43px;
  height: 15px;
  background: #fff;
  font-size: 8px;
}
.mode::after {
  content: "";
  position: absolute;
  top: 6px;
  right: 0;
  border: 3px solid transparent;
  border-top: 4px solid #222;
  border-bottom: 0;
}

/* Tool page */
.panel {
  display: grid;
  grid-template-columns: 187fr 179fr 178fr 178fr 177fr 97px;
  height: 101px;
  padding: 4px 0 1px 1px;
}
.col {
  display: grid;
  grid-template-rows: repeat(7, minmax(0, 1fr));
}
.col button {
  padding-left: 4px;
  border-bottom: 2px solid #999;
  border-right: 2px solid #999;
  line-height: 11px;
}
.pages label {
  display: flex;
  align-items: center;
}
.pages input {
  appearance: none;
  width: 8px;
  height: 8px;
  margin: 0 9px 0 10px;
  border: 1px solid #fff;
  border-top-color: #666;
  border-left-color: #666;
  border-radius: 50%;
  background: #fff;
}

/* Scroll bars */
.vscroll {
  display: flex;
  flex-direction: column;
  align-items: center;
  padding-left: 1px;
  background: #ececec;
}
.vscroll .up {
  margin: 6px 0;
  border: 2px solid transparent;
  border-bottom: 3px solid #555;
  border-top: 0;
}
.vscroll .thumb {
  width: 9px;
  height: 608px;
  border: 1px solid #bbb;
  border-radius: 2px;
  background: repeating-linear-gradient(#999 0, #999 1px, transparent 1px, transparent 2px) no-repeat center / 4px 6px,
    linear-gradient(90deg, #fbfbfb, #d0d0d0);
}
.hscroll {
  grid-column: 1 / -1;
  display: flex;
  align-items: center;
  border-top: 1px solid #aaa;
  background: linear-gradient(#f6f6f6, #dcdcdc 65%, #c4c4c4 80%);
}
.hscroll .left {
  margin-left: 4px;
  border: 2px solid transparent;
  border-right: 3px solid #777;
  border-left: 0;
}
.hscroll .marks {
  width: 6px;
  height: 4px;
  margin: 0 auto;
  background: repeating-linear-gradient(90deg, #888 0, #888 1px, transparent 1px, transparent 2px);
}

/* Player window */
.player {
  position: absolute;
  right: 0;
  bottom: -6px;
  width: 257px;
  height: 60px;
  border: 2px solid #2a63c8;
  border-top: 0;
  background: #f0f0ee;
}
.player-title {
  display: flex;
  align-items: center;
  gap: 2px;
  height: 17px;
  padding-left: 3px;
  background: linear-gradient(#2f73dc, #2362c8);
  color: #fff;
  font: bold 8px/12px "Noto Sans", sans-serif;
}
.player-title svg {
  width: 12px;
  height: 12px;
}
.player-title button {
  width: 12px;
  height: 11px;
  margin: 0 4px 0 auto;
  background: #3a79d8;
  color: #8fb4ee;
  line-height: 9px;
}
.player-menu {
  display: flex;
  gap: 11px;
  padding: 4px 0 5px 5px;
}
.player-bar {
  display: flex;
  align-items: center;
  gap: 2px;
  padding-left: 5px;
}
.player-bar button {
  width: 14px;
  height: 16px;
  border: 1px solid #ddd;
  background: #f8f8f8;
  fill: #111;
}
.player-bar button:disabled {
  fill: #bbb;
}
.player-bar svg {
  display: block;
  width: 12px;
  height: 12px;
}
.player-bar .space {
  width: 3px;
}
.player-bar output {
  flex: 1;
  margin: 0 3px 0 16px;
  border: 1px solid #666;
  background: #0a140a;
  color: #2f9a1f;
  text-align: center;
  white-space: nowrap;
  line-height: 16px;
}
```

FILE: model.js
```
// Cross sections of the bumper, from the free end to the end cap.
// Points run: back strip, back edge, front edge, fillet middle, fillet bottom, side middle, side bottom, bottom strip
const sections = [
  [[526, 91], [520, 94], [439, 167], [430, 179], [427, 196], [427, 216], [428, 237], [433, 246]],
  [[683, 157], [677, 161], [596, 231], [588, 246], [584, 260], [584, 281], [585, 301], [588, 311]],
  [[843, 231], [835, 233], [755, 303], [745, 317], [742, 334], [742, 354], [743, 375], [746, 385]],
  [[1006, 311], [997, 316], [916, 385], [908, 397], [906, 413], [905, 434], [906, 455], [911, 463]]
];

// strip, top, fillet, side, bottom
const colors = [
  ['#2a8c8c', '#48c9c9', '#55f5f5', '#48cfcf', '#2f9494'],
  ['#8f8f00', '#cccc00', '#ffff00', '#d2d200', '#929200'],
  ['#2b8a00', '#42d000', '#55ff00', '#42d000', '#2f9300']
];
const bands = [[0, 1], [1, 2], [2, 4], [4, 6], [6, 7]];

const model = document.getElementById('model');

function lerp(a, b, t) {
  return [a[0] + (b[0] - a[0]) * t, a[1] + (b[1] - a[1]) * t];
}

function addPath(d, cls, fill) {
  const path = document.createElementNS('http://www.w3.org/2000/svg', 'path');
  path.setAttribute('d', d);
  if (cls) path.setAttribute('class', cls);
  if (fill) path.setAttribute('fill', fill);
  model.appendChild(path);
}

for (let s = 0; s < 3; s++) {
  const a = sections[s];
  const b = sections[s + 1];

  bands.forEach(([from, to], i) => {
    const pts = a.slice(from, to + 1).concat(b.slice(from, to + 1).reverse());
    addPath('M' + pts.join('L') + 'z', '', colors[s][i]);
  });

  let lines = '';
  // lengthwise lines
  for (let i = 0; i < a.length; i++) {
    lines += 'M' + a[i] + 'L' + b[i];
  }
  for (let r = 1; r < 4; r++) {
    lines += 'M' + lerp(a[1], a[2], r / 4) + 'L' + lerp(b[1], b[2], r / 4);
  }
  // crosswise lines
  for (let c = 1; c < 6; c++) {
    lines += 'M' + a.map((p, i) => lerp(p, b[i], c / 6)).join('L');
  }
  addPath(lines, 'grid-line');
}

sections.slice(0, 3).forEach(sec => addPath('M' + sec.join('L'), 'seam'));
```
